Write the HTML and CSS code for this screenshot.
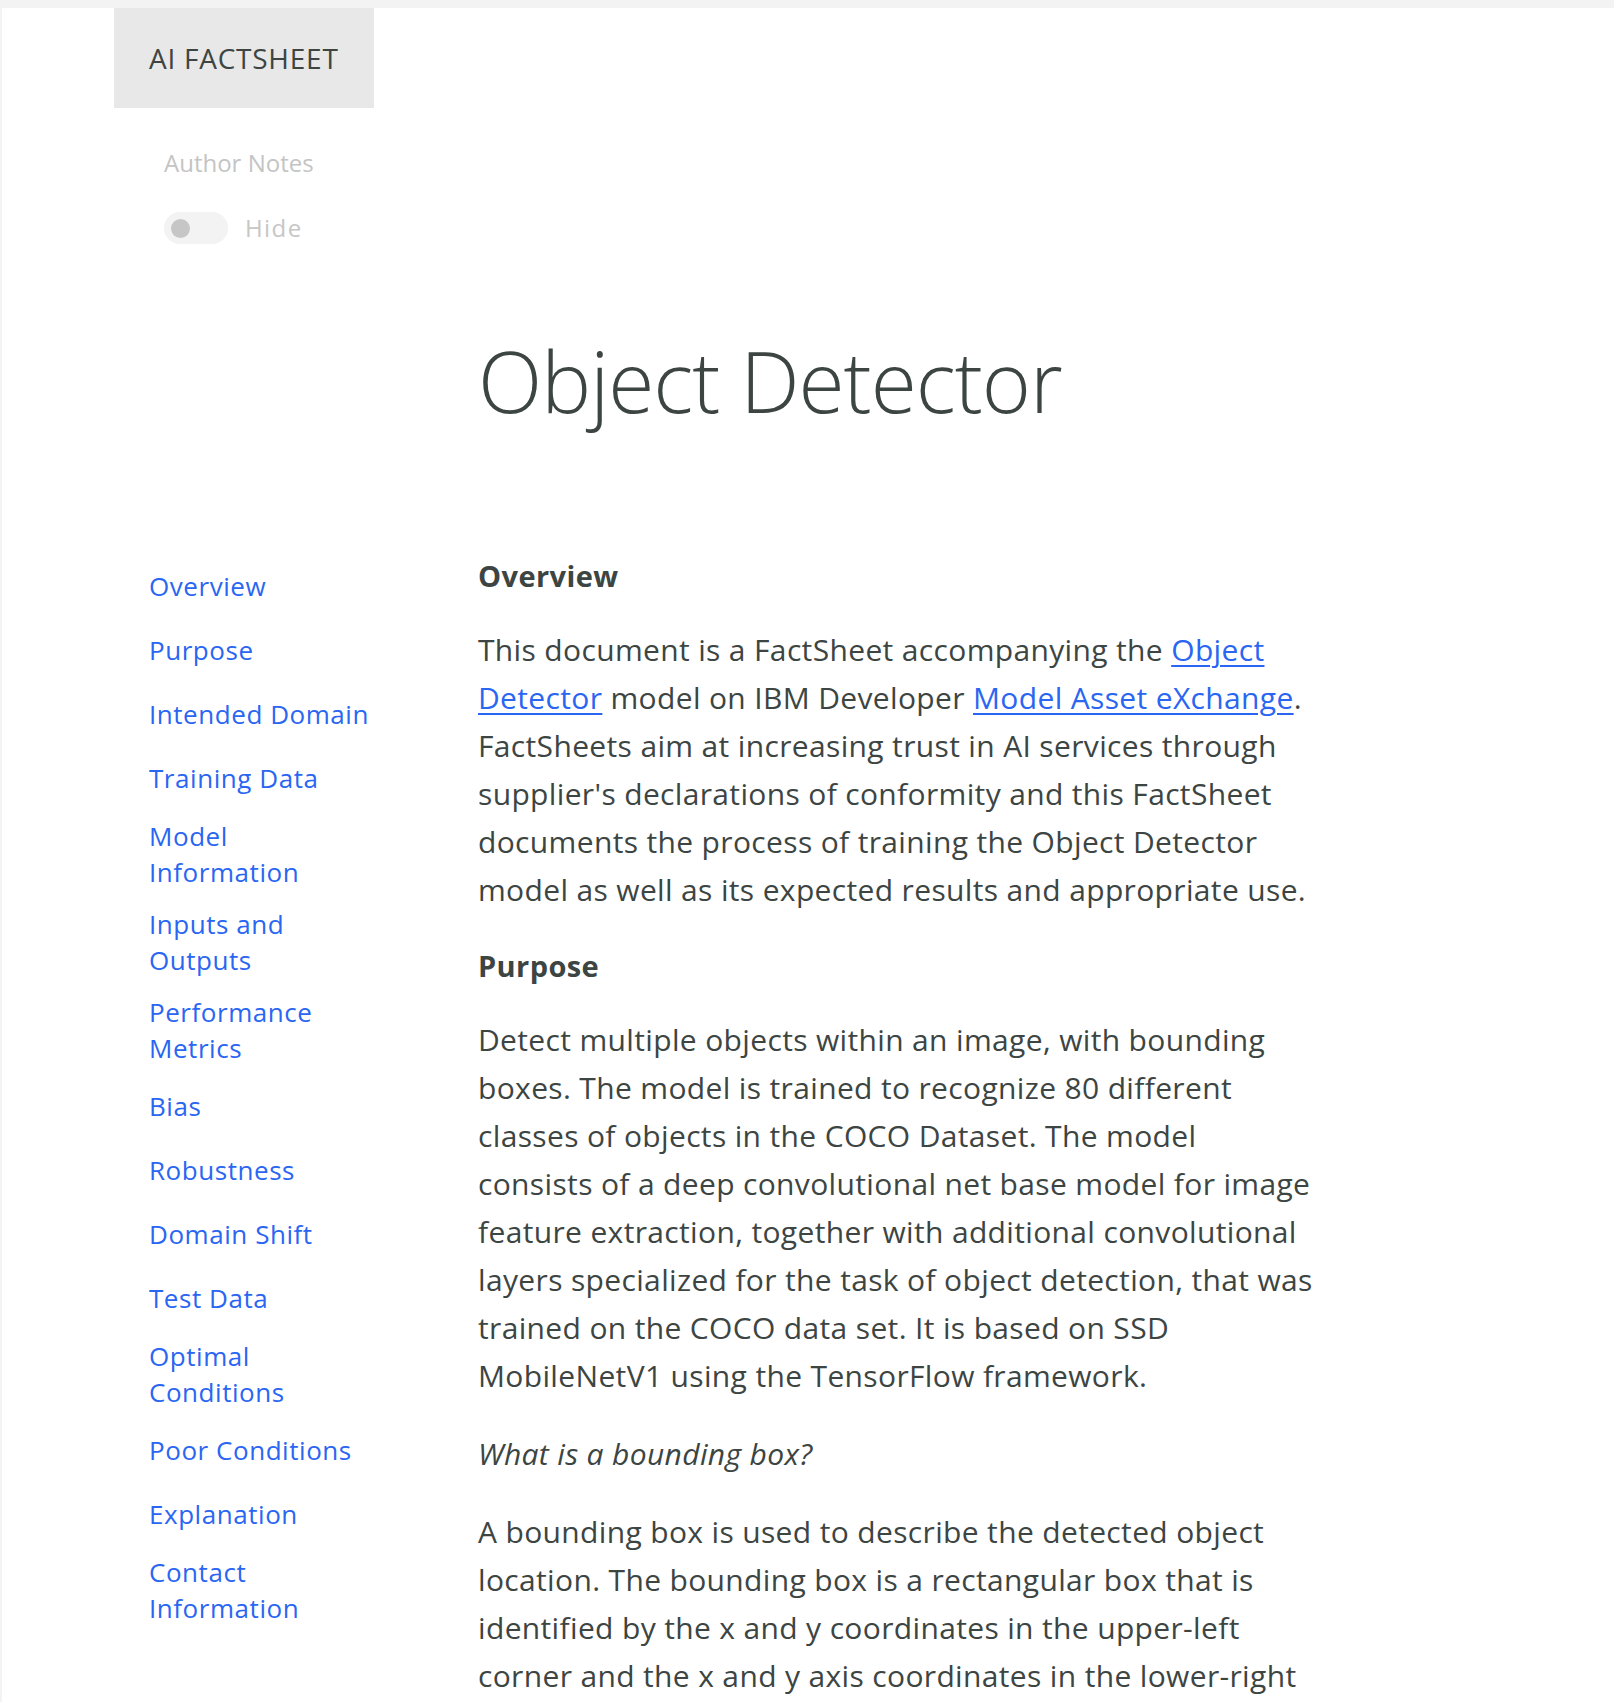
FILE: index.html
```html
<!DOCTYPE html>
<html lang="en">
<head>
<meta charset="utf-8">
<title>AI FactSheet – Object Detector</title>
<link rel="stylesheet" href="styles.css">
</head>
<body>
<div class="page">
  <header class="top">
    <div class="brand">AI FACTSHEET</div>
    <div class="notes">
      <div class="notes-label">Author Notes</div>
      <div class="toggle">
        <span class="switch"><span class="knob"></span></span>
        <span class="toggle-text">Hide</span>
      </div>
    </div>
  </header>

  <div class="layout">
    <h1 class="title">Object Detector</h1>

    <nav class="toc">
      <a href="#overview">Overview</a>
      <a href="#purpose">Purpose</a>
      <a href="#domain">Intended Domain</a>
      <a href="#training">Training Data</a>
      <a href="#model">Model Information</a>
      <a href="#io">Inputs and Outputs</a>
      <a href="#performance">Performance Metrics</a>
      <a href="#bias">Bias</a>
      <a href="#robustness">Robustness</a>
      <a href="#shift">Domain Shift</a>
      <a href="#test">Test Data</a>
      <a href="#optimal">Optimal Conditions</a>
      <a href="#poor">Poor Conditions</a>
      <a href="#explanation">Explanation</a>
      <a href="#contact">Contact Information</a>
    </nav>

    <article class="doc">
      <h2 id="overview">Overview</h2>
      <p>This document is a FactSheet accompanying the <a href="#">Object Detector</a> model on IBM Developer <a href="#">Model Asset eXchange</a>. FactSheets aim at increasing trust in AI services through supplier's declarations of conformity and this FactSheet documents the process of training the Object Detector model as well as its expected results and appropriate use.</p>

      <h2 id="purpose">Purpose</h2>
      <p>Detect multiple objects within an image, with bounding boxes. The model is trained to recognize 80 different classes of objects in the COCO Dataset. The model consists of a deep convolutional net base model for image feature extraction, together with additional convolutional layers specialized for the task of object detection, that was trained on the COCO data set. It is based on SSD MobileNetV1 using the TensorFlow framework.</p>
      <p class="question">What is a bounding box?</p>
      <p>A bounding box is used to describe the detected object location. The bounding box is a rectangular box that is identified by the x and y coordinates in the upper-left corner and the x and y axis coordinates in the lower-right corner of the rectangle.</p>
    </article>
  </div>
</div>
</body>
</html>
```

FILE: styles.css
```css
html, body {
  margin: 0;
}

body {
  background: #f3f3f3;
  padding: 8px 0 0 2px;
  font-family: "Open Sans", "Noto Sans", "Liberation Sans", sans-serif;
  color: #3d4543;
}

.page {
  background: #ffffff;
  min-height: 1900px;
}

/* ---------- header ---------- */
.brand {
  margin-left: 112px;
  width: 260px;
  height: 100px;
  box-sizing: border-box;
  padding-left: 35px;
  display: flex;
  align-items: center;
  background: #e8e8e8;
  font-size: 28px;
  letter-spacing: 0.75px;
  color: #3d4543;
}

.notes {
  margin-left: 162px;
  padding-top: 39px;
}

.notes-label {
  font-size: 24px;
  line-height: 32px;
  color: #c4c4c4;
}

.toggle {
  margin-top: 33px;
  display: flex;
  align-items: center;
  gap: 17px;
}

.switch {
  width: 64px;
  height: 32px;
  box-sizing: border-box;
  padding-left: 7px;
  border-radius: 16px;
  background: #f3f3f3;
  display: flex;
  align-items: center;
}

.knob {
  width: 19px;
  height: 19px;
  border-radius: 50%;
  background: #c6c6c6;
}

.toggle-text {
  font-size: 24px;
  line-height: 32px;
  letter-spacing: 1.4px;
  color: #c6c6c6;
}

/* ---------- layout ---------- */
.layout {
  display: grid;
  grid-template-columns: 229px 837px;
  column-gap: 100px;
  padding-left: 147px;
  margin-top: 87px;
  align-items: start;
}

.title {
  grid-column: 2;
  margin: 0 0 124px;
  font-size: 84px;
  line-height: 1.2;
  font-weight: 300;
  letter-spacing: -1px;
  color: #3d4543;
}

/* ---------- table of contents ---------- */
.toc {
  grid-column: 1;
  display: flex;
  flex-direction: column;
  gap: 16px;
  padding-top: 6px;
}

.toc a {
  min-height: 48px;
  display: flex;
  align-items: center;
  font-size: 26px;
  line-height: 36px;
  letter-spacing: 0.55px;
  color: #2a66f2;
  text-decoration: none;
}

/* ---------- document ---------- */
.doc {
  grid-column: 2;
}

.doc h2 {
  margin: 32px 0 30px;
  font-size: 29px;
  line-height: 40px;
  font-weight: 700;
  letter-spacing: 0.4px;
  color: #3d4543;
}

.doc h2:first-child {
  margin-top: 0;
}

.doc p {
  margin: 0 0 30px;
  font-size: 30px;
  line-height: 48px;
  letter-spacing: 0.35px;
}

.doc p a {
  color: #2a66f2;
  text-decoration: underline;
  text-decoration-thickness: 2px;
  text-underline-offset: 4px;
}

.doc .question {
  font-style: italic;
}
```
